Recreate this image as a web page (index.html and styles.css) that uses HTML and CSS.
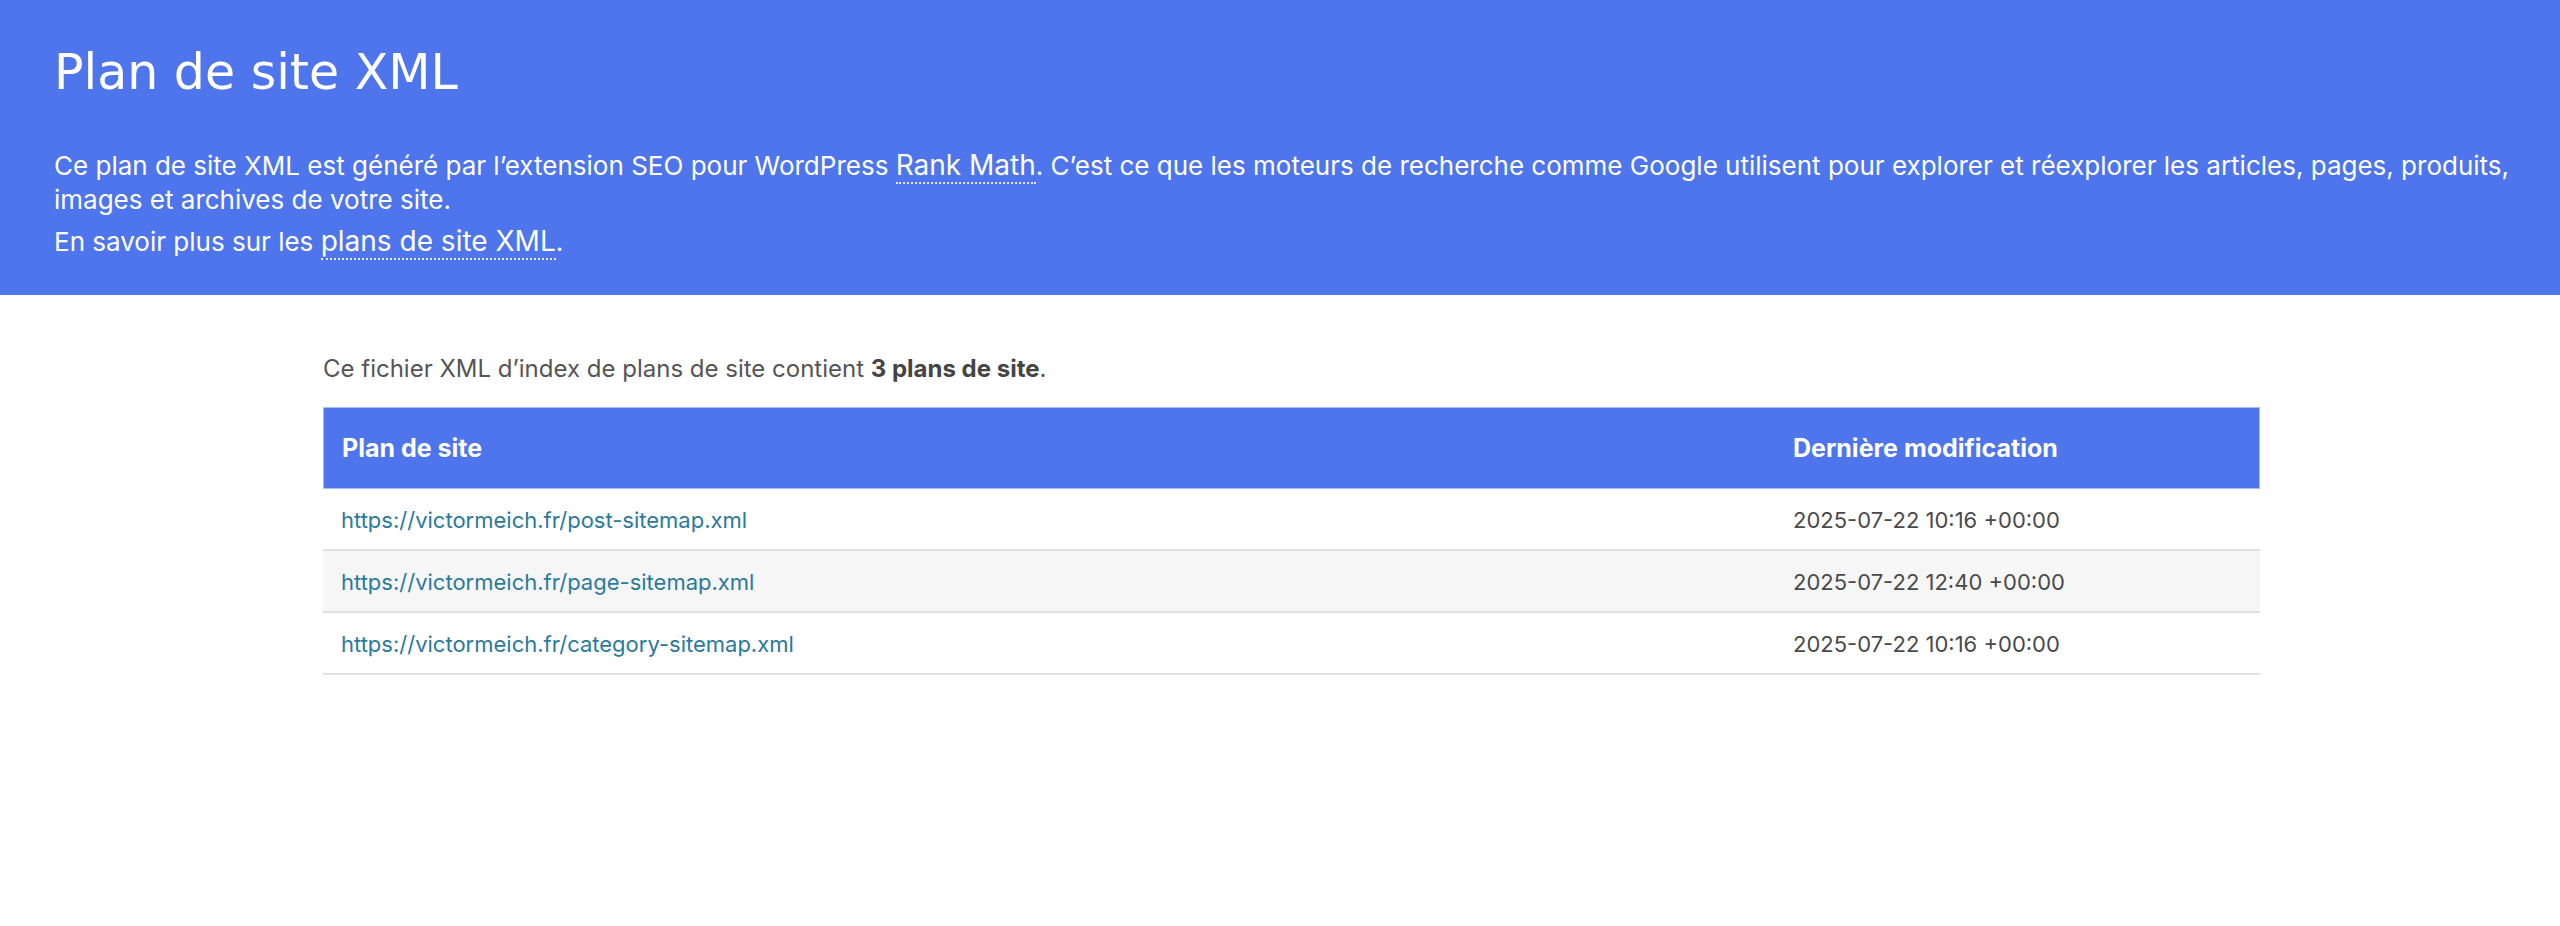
FILE: index.html
```
<!DOCTYPE html>
<html lang="fr">
<head>
    <meta charset="utf-8">
    <title>Plan de site XML</title>
    <link rel="stylesheet" href="styles.css">
</head>
<body>

<!-- Description -->
<div id="description">
    <h1>Plan de site XML</h1>
    <p>Ce plan de site XML est généré par l’extension SEO pour WordPress <a href="#">Rank Math</a>. C’est ce que les moteurs de recherche comme Google utilisent pour explorer et réexplorer les articles, pages, produits, images et archives de votre site.</p>
    <p class="more">En savoir plus sur les <a href="#">plans de site XML</a>.</p>
</div>

<!-- Index -->
<div id="content">
    <p class="expl">Ce fichier XML d’index de plans de site contient <strong>3 plans de site</strong>.</p>
    <table id="sitemap">
        <thead>
            <tr>
                <th class="col-loc">Plan de site</th>
                <th class="col-date">Dernière modification</th>
            </tr>
        </thead>
        <tbody>
            <tr>
                <td><a href="#">https://victormeich.fr/post-sitemap.xml</a></td>
                <td>2025-07-22 10:16 +00:00</td>
            </tr>
            <tr>
                <td><a href="#">https://victormeich.fr/page-sitemap.xml</a></td>
                <td>2025-07-22 12:40 +00:00</td>
            </tr>
            <tr>
                <td><a href="#">https://victormeich.fr/category-sitemap.xml</a></td>
                <td>2025-07-22 10:16 +00:00</td>
            </tr>
        </tbody>
    </table>
</div>

</body>
</html>
```

FILE: styles.css
```
body {
    margin: 0;
    font-family: Inter, "Noto Sans", sans-serif;
    color: #555;
    background-color: #fff;
}

a {
    color: #2b7a9b;
    text-decoration: none;
}

#description {
    background-color: #4e75eb;
    color: #fff;
    padding: 44px 30px 36px 54px;
}

#description h1 {
    margin: 0;
    font-family: "DejaVu Sans", Verdana, sans-serif;
    font-size: 49px;
    font-weight: normal;
}

#description p {
    margin: 48px 0 0;
    font-size: 26px;
    line-height: 34px;
}

#description p.more {
    margin-top: 8px;
}

#description a {
    color: #fff;
    font-size: 28px;
    line-height: 30px;
    border-bottom: 2px dotted rgba(255, 255, 255, 0.85);
}

#content {
    width: 1937px;
    margin-left: 323px;
}

.expl {
    margin: 57px 0 21px;
    font-size: 24px;
    line-height: 34px;
}

.expl strong {
    color: #444;
}

#sitemap {
    width: 100%;
    border-collapse: separate;
    border-spacing: 0;
}

#sitemap th {
    height: 80px;
    padding: 0 18px;
    text-align: left;
    font-size: 25px;
    color: #fff;
    background-color: #4e75eb;
    border-top: 1px solid #a9bcf5;
    border-bottom: 1px solid #a9bcf5;
}

#sitemap th.col-loc {
    border-left: 1px solid #a9bcf5;
}

#sitemap th.col-date {
    width: 448px;
    border-right: 1px solid #a9bcf5;
}

#sitemap td {
    padding: 20px 18px 18px;
    font-size: 22px;
    line-height: 22px;
    color: #4a4a4a;
    border-bottom: 2px solid #e1e1e1;
}

#sitemap tbody tr:nth-child(even) td {
    background-color: #f6f6f6;
}
```
